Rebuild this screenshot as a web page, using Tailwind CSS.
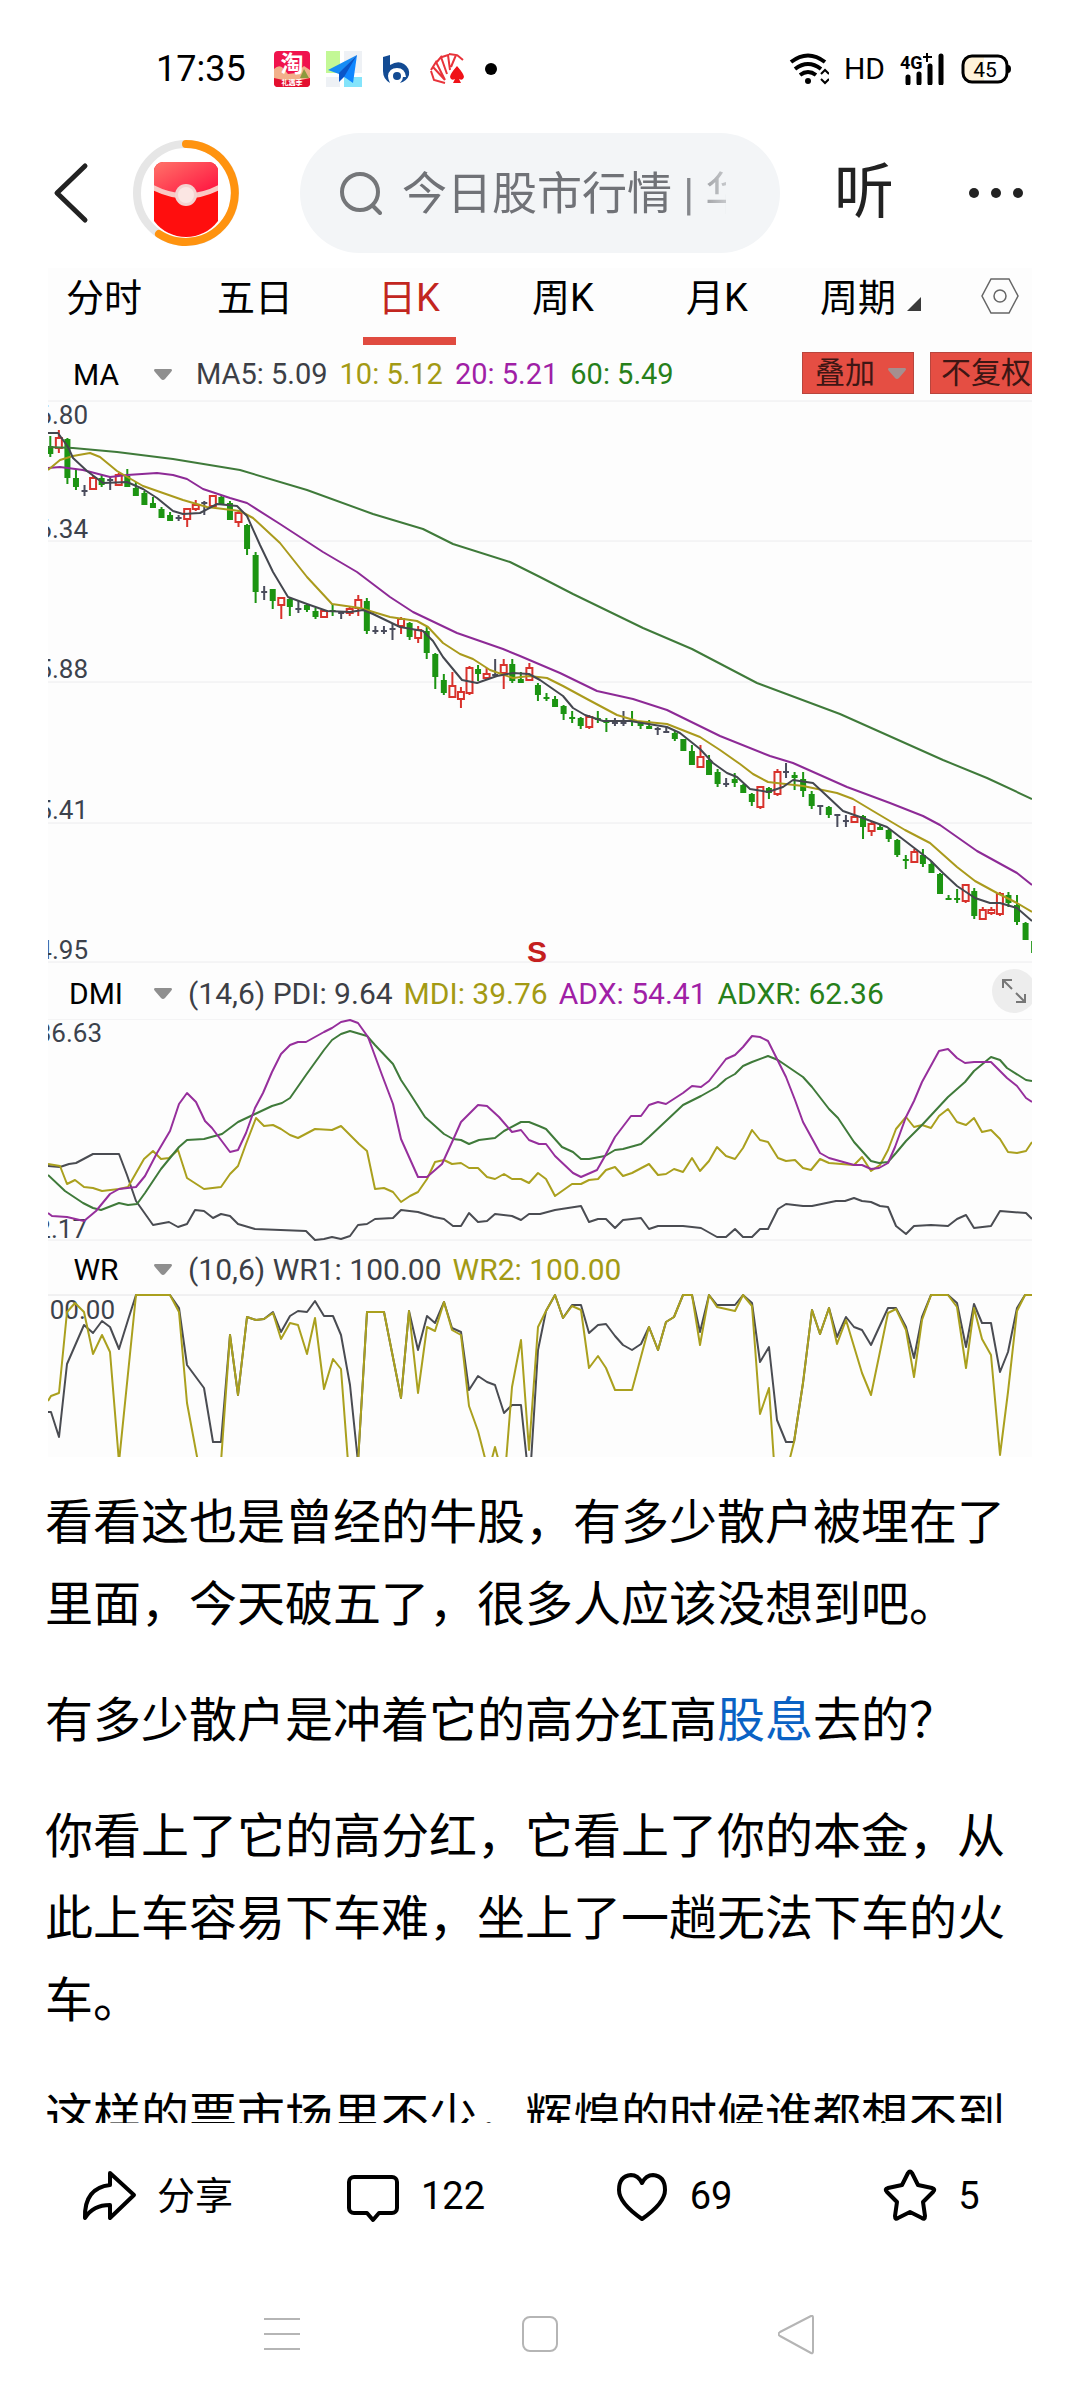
<!DOCTYPE html>
<html lang="zh-CN">
<head>
    <meta charset="UTF-8">
    <meta name="viewport" content="width=device-width, initial-scale=1.0">
    <title>今日股市行情</title>
    <script src="https://cdn.jsdelivr.net/npm/@tailwindcss/browser@4"></script>
</head>
<body class="flex h-screen flex-col overflow-hidden bg-white font-['Roboto','Noto_Sans_CJK_SC',sans-serif] text-black">

<!-- status bar -->
<div class="flex h-[110px] shrink-0 items-center pt-7 pr-[69px] pl-[156px]">
    <span class="text-[36px] leading-none">17:35</span>
    <div class="ml-7 flex items-center gap-4">
        <svg class="size-9" viewBox="0 0 36 36">
            <rect width="36" height="36" rx="4" fill="#f0134d"/>
            <path d="M0 18q5-5 9-1l5 6 8-1 8-7 6 4v11H0z" fill="#f2b08a"/>
            <path d="M26 27l4-9 5 9z" fill="#8c9a3c"/>
            <path d="M0 27q18 5 36 0v5a4 4 0 0 1-4 4H4a4 4 0 0 1-4-4z" fill="#e3102f"/>
            <text x="18" y="21" text-anchor="middle" font-size="23" font-weight="700" fill="#fff">淘</text>
            <text x="18" y="34" text-anchor="middle" font-size="7" font-weight="700" fill="#fff">礼遇季</text>
        </svg>
        <svg class="size-9" viewBox="0 0 36 36">
            <path d="M0 0h14v22H0z" fill="#c3f896"/>
            <path d="M18 0h18v22H18zM0 26h14v10H0z" fill="#eef1f5"/>
            <path d="M18 26h18v10H18z" fill="#84e4fb"/>
            <path d="M31 4L2 19l11 4z" fill="#168cf5"/>
            <path d="M31 4L14 23l13 9z" fill="#0f86ff"/>
            <path d="M31 4L13 22v9l5-5z" fill="#0a55c8"/>
        </svg>
        <svg class="size-9" viewBox="0 0 36 36">
            <path d="M5 6l7-2v10q8-5 14-1 6 4 5 11-2 6-9 8 3-3 3-6h3q-1-9-9-9-8 0-9 8 0 3 2 7-7-4-7-12z" fill="#134b93"/>
            <circle cx="19" cy="25" r="4" fill="#134b93"/>
        </svg>
        <svg class="size-9" viewBox="0 0 36 36" fill="none" stroke="#e8333a" stroke-width="2">
            <path d="M1 19l5-8 9 18M6 12l5-6 6 17M12 6l6-2 2 15M19 3l7 1-5 12M27 4l6 5M1 20l3 9 11 3M3 16l12 13"/>
            <path d="M27 15q-7 8-7 11 1 4 5 2l-2 4h8l-2-4q4 2 5-2 0-3-7-11z" fill="#f01218" stroke="none"/>
        </svg>
        <span class="ml-[3px] size-3 rounded-full bg-black"></span>
    </div>
    <div class="ml-auto flex items-center gap-[15px]">
        <svg class="h-8 w-10" viewBox="0 0 40 32" fill="none" stroke="#000" stroke-width="4">
            <path d="M2 9q17-13 34 0M6 16q13-10 26 0M11 22q8-6 16 0"/>
            <circle cx="19" cy="28" r="3" fill="#000" stroke="none"/>
            <path d="M32 21l4-4 4 4M32 26l4 4 4-4" stroke-width="2"/>
        </svg>
        <span class="text-[30px] leading-none">HD</span>
        <svg class="h-8 w-[46px]" viewBox="0 0 46 32">
            <text x="0" y="16" font-size="18" font-weight="700">4G</text>
            <path d="M23 4h9M27 0v9" stroke="#000" stroke-width="2"/>
            <path d="M8 24v6M19 21v9M30 13v17M41 3v27" stroke="#000" stroke-width="5" stroke-linecap="round"/>
        </svg>
        <svg class="h-8 w-[50px]" viewBox="0 0 50 32">
            <rect x="2" y="3" width="44" height="26" rx="9" fill="#fff"/>
            <path d="M11 3h12v26H11a9 9 0 0 1-9-9v-8a9 9 0 0 1 9-9z" fill="#fff3da"/>
            <rect x="2" y="3" width="44" height="26" rx="9" fill="none" stroke="#000" stroke-width="3"/>
            <path d="M47 12q3 0 3 4t-3 4z"/>
            <text x="24" y="24" text-anchor="middle" font-size="21">45</text>
        </svg>
    </div>
</div>

<!-- header -->
<header class="flex h-[158px] shrink-0 items-center pr-14 pl-[52px]">
    <button type="button" aria-label="返回" class="mt-2">
        <svg class="h-16 w-10" viewBox="0 0 40 64" fill="none" stroke="#222" stroke-width="5" stroke-linecap="round" stroke-linejoin="round">
            <path d="M33 5L5 32l28 27"/>
        </svg>
    </button>
    <button type="button" aria-label="红包" class="mt-2 ml-10">
        <svg class="size-[108px]" viewBox="0 0 108 108">
            <defs>
                <linearGradient id="flap" x1="0" y1="0" x2="1" y2="1">
                    <stop offset="0" stop-color="#ff7a6c"/>
                    <stop offset="1" stop-color="#ff0a3c"/>
                </linearGradient>
                <clipPath id="round"><path d="M22 32a9 9 0 0 1 9-9h46a9 9 0 0 1 9 9v50a40 40 0 0 1-64 0z"/></clipPath>
            </defs>
            <circle cx="54" cy="54" r="49" fill="none" stroke="#e6e6e6" stroke-width="8"/>
            <path d="M54 5a49 49 0 1 1-27 90" fill="none" stroke="#ff930f" stroke-width="8" stroke-linecap="round"/>
            <g clip-path="url(#round)">
                <rect x="20" y="20" width="68" height="80" fill="#ff0e0e"/>
                <path d="M20 20h68v28q-34 18-68 0z" fill="url(#flap)"/>
                <path d="M20 48q34 18 68 0" fill="none" stroke="#f9c9c4" stroke-width="5"/>
            </g>
            <circle cx="54" cy="56" r="11" fill="#f3d3d0"/>
            <circle cx="54" cy="56" r="8" fill="#fbe6e3"/>
        </svg>
    </button>
    <label class="mt-2 ml-[60px] flex h-[120px] min-w-0 flex-1 items-center rounded-full bg-[#f3f5f7] pr-[54px] pl-[38px]">
        <svg class="size-11 shrink-0" viewBox="0 0 44 44" fill="none" stroke="#747679" stroke-width="4" stroke-linecap="round">
            <circle cx="22" cy="21" r="18"/>
            <path d="M35 35l7 7"/>
        </svg>
        <input type="text" aria-label="搜索" placeholder="今日股市行情 | 华为" class="ml-5 w-full min-w-0 bg-transparent pt-1 text-[45px] leading-[60px] outline-none placeholder:text-[#707277] [mask-image:linear-gradient(to_right,black_85%,transparent_108%)]">
    </label>
    <button type="button" class="mt-2 ml-[54px] text-[60px] leading-[72px] text-[#222]">听</button>
    <button type="button" aria-label="更多" class="mt-2 ml-[74px]">
        <svg class="h-3 w-14" viewBox="0 0 56 12" fill="#222">
            <circle cx="6" cy="6" r="5"/><circle cx="28" cy="6" r="5"/><circle cx="50" cy="6" r="5"/>
        </svg>
    </button>
</header>

<main class="min-h-0 flex-1 overflow-hidden">
    <!-- stock chart -->
    <section class="mx-12 overflow-hidden bg-[#fdfdfd]">
        <nav class="grid h-[77px] grid-cols-[130fr_154fr_154fr_154fr_154fr_238fr] text-[38px] leading-[60px]">
            <button type="button" class="flex items-start pl-[18px]">分时</button>
            <button type="button" class="flex items-start justify-center">五日</button>
            <button type="button" class="flex flex-col items-center justify-between text-[#c2261f]">日K<span class="mx-auto h-2 w-[93px] bg-[#e04b40]"></span></button>
            <button type="button" class="flex items-start justify-center">周K</button>
            <button type="button" class="flex items-start justify-center">月K</button>
            <div class="flex items-start justify-between pr-3 pl-[26px]">
                <button type="button" class="flex items-center gap-[10px]">周期
                    <svg class="mt-3 size-4" viewBox="0 0 16 16" fill="#3a3a3a"><path d="M15 1v14H1z"/></svg>
                </button>
                <button type="button" aria-label="设置" class="mt-[10px]">
                    <svg class="h-9 w-10" viewBox="0 0 40 36" fill="none" stroke="#666" stroke-width="1.5">
                        <path d="M11 1h18l9 17-9 17H11L2 18z"/>
                        <circle cx="20" cy="18" r="6"/>
                    </svg>
                </button>
            </div>
        </nav>

        <div class="flex h-[55px] items-center pt-1 text-[29px] whitespace-nowrap">
            <select aria-label="主图指标" class="w-24 appearance-none text-center text-[30px]"><option>MA</option><option>BOLL</option></select>
            <svg class="ml-[10px] h-[11px] w-[18px] shrink-0" viewBox="0 0 18 11" fill="#8f8f8f"><path d="M1 0h16q2 1 0 3l-6 7q-2 2-4 0L1 3q-2-2 0-3z"/></svg>
            <p class="ml-6 flex gap-3">
                <span class="text-[#3c3f46]">MA5: 5.09</span>
                <span class="text-[#a39a14]">10: 5.12</span>
                <span class="text-[#a01fa6]">20: 5.21</span>
                <span class="text-[#27801a]">60: 5.49</span>
            </p>
            <div class="relative -mt-1 ml-auto">
                <select aria-label="叠加" class="block h-[42px] w-28 appearance-none border border-[#b8453d] bg-[#e54e43] pl-3 text-[30px] leading-[40px] text-[#3d1614]"><option>叠加</option></select>
                <svg class="pointer-events-none absolute top-4 right-2 h-[11px] w-[18px]" viewBox="0 0 18 11" fill="#a58f8f"><path d="M1 0h16q2 1 0 3l-6 7q-2 2-4 0L1 3q-2-2 0-3z"/></svg>
            </div>
            <button type="button" class="-mt-1 ml-4 h-[42px] w-[102px] shrink-0 overflow-hidden border border-r-0 border-[#b8453d] bg-[#e54e43] pl-[10px] text-left text-[30px] leading-[40px] text-[#3d1614]">不复权</button>
        </div>

        <svg id="kline" class="block w-full" viewBox="48 400 984 563" fill="none">
            <path d="M48 401h984M48 541h984M48 682h984M48 823h984M48 962h984" stroke="#ececee" stroke-width="1"/>
            <g font-size="26" fill="#3c424c" text-anchor="end">
                <text x="88" y="424">6.80</text>
                <text x="88" y="538">6.34</text>
                <text x="88" y="678">5.88</text>
                <text x="88" y="819">5.41</text>
                <text x="88" y="959">4.95</text>
            </g>
            <text x="527" y="962" font-family="Liberation Sans, sans-serif" font-size="30" font-weight="700" fill="#c4201f">S</text>
        </svg>

        <div class="flex h-14 items-center pt-1 text-[30px] whitespace-nowrap">
            <select aria-label="副图指标一" class="w-24 appearance-none text-center"><option>DMI</option><option>MACD</option></select>
            <svg class="ml-[10px] h-[11px] w-[18px] shrink-0" viewBox="0 0 18 11" fill="#8f8f8f"><path d="M1 0h16q2 1 0 3l-6 7q-2 2-4 0L1 3q-2-2 0-3z"/></svg>
            <p class="ml-4 flex gap-[11px]">
                <span class="text-[#3c3f46]">(14,6) PDI: 9.64</span>
                <span class="text-[#a39a14]">MDI: 39.76</span>
                <span class="text-[#a01fa6]">ADX: 54.41</span>
                <span class="text-[#27801a]">ADXR: 62.36</span>
            </p>
            <button type="button" aria-label="全屏" class="-mt-1 -mr-1 ml-auto flex size-11 items-center justify-center rounded-full bg-[#ededed]">
                <svg class="size-6" viewBox="0 0 24 24" fill="none" stroke="#777" stroke-width="2">
                    <path d="M1 9V1h9M1 1l9 9M23 15v8h-9M23 23l-9-9"/>
                </svg>
            </button>
        </div>

        <svg id="dmi" class="block w-full" viewBox="48 1019 984 222" fill="none">
            <path d="M48 1019h984M48 1240h984" stroke="#ececee" stroke-width="1"/>
            <g font-size="26" fill="#3c424c" text-anchor="end">
                <text x="102" y="1042">36.63</text>
                <text x="87" y="1238">2.17</text>
            </g>
        </svg>

        <div class="flex h-[53px] items-center pt-1 text-[30px] whitespace-nowrap">
            <select aria-label="副图指标二" class="w-24 appearance-none text-center"><option>WR</option><option>KDJ</option></select>
            <svg class="ml-[10px] h-[11px] w-[18px] shrink-0" viewBox="0 0 18 11" fill="#8f8f8f"><path d="M1 0h16q2 1 0 3l-6 7q-2 2-4 0L1 3q-2-2 0-3z"/></svg>
            <p class="ml-4 flex gap-[11px]">
                <span class="text-[#3c3f46]">(10,6) WR1: 100.00</span>
                <span class="text-[#a39a14]">WR2: 100.00</span>
            </p>
        </div>

        <svg id="wr" class="block w-full" viewBox="48 1294 984 163" fill="none">
            <path d="M48 1295h984" stroke="#e4e4e6" stroke-width="1"/>
            <text x="115" y="1319" text-anchor="end" font-size="26" fill="#3c424c">00.00</text>
        </svg>
    </section>

    <!-- article text -->
    <article class="mt-[25px] flex flex-col gap-[34px] px-[45px] text-[48px] leading-[82px]">
        <p>看看这也是曾经的牛股，有多少散户被埋在了里面，今天破五了，很多人应该没想到吧。</p>
        <p>有多少散户是冲着它的高分红高<a href="#" class="text-[#0a62c4]">股息</a>去的？</p>
        <p>你看上了它的高分红，它看上了你的本金，从此上车容易下车难，坐上了一趟无法下车的火车。</p>
        <p>这样的票市场里不少，辉煌的时候谁都想不到</p>
    </article>
</main>

<!-- actions -->
<footer class="grid h-[147px] shrink-0 grid-cols-4 bg-white pr-5 pb-[2px] pl-7 text-[38px] leading-none">
    <button type="button" class="flex items-center justify-center gap-5">
        <svg class="size-14" viewBox="0 0 56 56" fill="none" stroke="#000" stroke-width="4" stroke-linejoin="round">
            <path d="M29 5l24 22-24 23V37Q12 37 4 50 3 20 29 17z"/>
        </svg>分享
    </button>
    <button type="button" class="flex items-center justify-center gap-5">
        <svg class="size-14" viewBox="0 0 56 56" fill="none" stroke="#000" stroke-width="4" stroke-linejoin="round">
            <path d="M9 9h38a5 5 0 0 1 5 5v26a5 5 0 0 1-5 5H34l-6 7-6-7H9a5 5 0 0 1-5-5V14a5 5 0 0 1 5-5z"/>
        </svg>122
    </button>
    <button type="button" class="flex items-center justify-center gap-5">
        <svg class="size-14" viewBox="0 0 56 56" fill="none" stroke="#000" stroke-width="4" stroke-linejoin="round">
            <path d="M28 51Q5 35 5 22 5 8 17 7q7 0 11 8 4-8 11-8 12 1 12 15 0 13-23 29z"/>
        </svg>69
    </button>
    <button type="button" class="flex items-center justify-center gap-5">
        <svg class="size-14" viewBox="0 0 56 56" fill="none" stroke="#000" stroke-width="4" stroke-linejoin="round">
            <path d="M26 5q2-3 4 0l6 12 14 3q4 1 1 4L41 34l2 14q0 4-3 2l-12-6-12 6q-3 2-3-2l2-14L5 24q-3-3 1-4l14-3z"/>
        </svg>5
    </button>
</footer>

<!-- system navigation -->
<nav class="flex h-[130px] shrink-0 items-center justify-between px-[262px]">
    <button type="button" aria-label="最近任务">
        <svg class="size-10" viewBox="0 0 40 40" stroke="#b5b5b5" stroke-width="2"><path d="M2 4h36M2 19h36M2 34h36"/></svg>
    </button>
    <button type="button" aria-label="主屏幕">
        <svg class="size-10" viewBox="0 0 40 40" fill="none" stroke="#b5b5b5" stroke-width="2"><rect x="3" y="2" width="34" height="34" rx="7"/></svg>
    </button>
    <button type="button" aria-label="返回">
        <svg class="size-10" viewBox="0 0 40 40" fill="none" stroke="#b5b5b5" stroke-width="2" stroke-linejoin="round"><path d="M33 1q2-1 2 2v33q0 3-2 2L2 21q-3-2 0-4z"/></svg>
    </button>
</nav>

<script>
    // g = falling, r = rising, k = flat; then high, body top, body bottom, low
    const candles = `g436,446,454,457 r430,438,448,453 g438,439,478,484 g470,478,487,490 k485,491,491,496 r475,478,489,490
        g475,478,485,487 k477,480,480,490 r473,475,485,486 g469,476,487,487 g482,488,496,496 g491,493,505,505 g497,503,508,508
        g507,509,518,518 g512,515,521,521 k515,518,518,521 r508,509,519,527 r500,505,509,511 k501,503,503,515 r496,496,506,507
        g495,497,505,505 g501,503,520,520 r511,513,522,527 g524,525,549,555 g552,555,592,603 k586,592,592,600 g589,589,601,609
        r597,598,605,619 g597,599,607,616 k601,609,609,613 g604,605,610,612 g608,611,617,619 r610,611,617,618 g604,610,611,616
        k611,613,613,619 r607,609,613,616 r595,600,608,616 g598,601,631,634 k626,631,631,634 k626,631,631,634 k624,629,629,640
        r617,619,626,634 g622,623,637,640 r626,630,638,643 g627,631,653,659 g653,654,677,689 g674,680,693,695 r672,686,697,698
        r687,692,699,708 r666,668,693,695 g665,669,674,681 r668,674,678,679 k659,675,675,676 r659,665,673,689 g659,664,681,683
        g672,679,683,683 r663,668,680,681 g683,685,695,701 g693,697,698,701 g696,699,707,707 g705,706,714,720 g711,717,719,723
        g717,718,726,729 r715,717,727,729 g711,718,720,723 g718,721,722,732 k718,723,723,726 k711,723,723,726 g711,720,722,726
        g722,723,726,729 g720,726,729,729 k727,729,729,735 k727,732,732,733 g730,733,739,741 g739,739,751,751 g745,751,765,765
        r745,757,767,767 g755,760,775,775 g769,772,784,787 k778,784,784,787 g773,779,783,787 g784,785,793,793 g793,794,802,806
        r787,787,807,809 g787,788,793,799 r769,772,794,796 k763,772,772,778 g772,775,778,790 g772,779,791,797 g791,794,806,809
        k806,806,806,815 g806,807,815,818 k815,815,815,827 k815,821,821,827 r806,817,822,822 g815,816,827,839 r821,824,831,836
        g824,827,830,830 g829,830,839,842 g839,840,855,857 g855,859,861,869 r849,852,862,862 g849,855,864,867 g861,864,873,873
        g873,874,894,894 g895,898,900,900 g889,898,900,903 r885,885,901,903 g888,891,916,919 r907,910,919,920 r907,910,913,915
        r892,894,914,916 g892,895,903,907 g895,905,922,925 g922,923,940,940 g940,941,953,953`;

    const lines = {
        kline: [
            ['#3f7a3a', '48,447 73,448 117,452 173,459 240,470 307,490 373,514 423,529 453,544 510,562 540,577 573,594 643,628 692,649 757,683 840,714 943,760 987,778 1032,799'],
            ['#8d2a96', '48,468 60,467 83,470 110,477 127,475 157,473 173,475 187,479 203,489 230,498 247,503 280,524 323,552 357,572 390,597 413,612 457,633 503,649 520,656 560,673 597,691 633,699 667,710 720,736 770,756 793,763 847,787 890,803 923,816 940,825 977,851 1017,873 1032,885'],
            ['#aa9a1c', '48,470 60,460 73,456 90,453 100,457 117,471 143,486 183,500 207,507 240,511 253,518 280,543 307,577 332,604 360,608 390,617 417,621 428,627 443,643 460,654 473,659 490,670 513,678 529,676 547,678 563,686 587,699 617,715 637,721 667,724 700,737 720,750 740,764 753,774 768,782 803,786 837,793 853,799 873,811 905,830 930,843 957,867 975,881 997,893 1017,903 1032,912'],
            ['#44474f', '48,433 58,433 68,447 73,458 87,471 103,483 127,482 143,489 157,498 173,511 183,514 200,513 217,504 237,506 247,516 260,545 273,572 288,597 307,604 327,611 350,612 363,610 373,614 400,627 423,631 433,641 443,657 462,680 477,683 497,676 513,673 529,674 540,680 563,696 573,708 585,715 603,721 630,721 667,727 680,733 700,749 713,763 727,773 737,777 750,789 768,792 783,787 793,780 813,783 827,796 843,811 860,817 887,827 913,847 930,860 943,873 957,886 975,898 990,903 1000,903 1017,908 1032,921']
        ],
        dmi: [
            ['#4a4c52', '48,1166 60,1167 69,1164 76,1163 93,1154 119,1154 127,1175 136,1201 153,1225 169,1222 178,1227 187,1224 195,1210 204,1211 213,1218 221,1214 230,1216 238,1224 255,1229 306,1231 315,1240 324,1239 332,1237 341,1239 350,1236 358,1225 367,1224 375,1219 393,1218 401,1210 418,1212 434,1217 444,1219 453,1226 461,1226 469,1213 478,1222 487,1221 495,1214 512,1216 521,1220 529,1214 540,1214 555,1210 581,1206 589,1222 598,1219 606,1219 615,1228 623,1220 641,1218 649,1229 658,1226 683,1226 701,1228 717,1237 726,1237 735,1229 743,1237 752,1237 760,1229 768,1229 778,1209 786,1204 803,1206 812,1206 836,1201 845,1201 854,1198 862,1201 871,1202 880,1206 888,1207 896,1226 906,1234 914,1226 931,1225 948,1226 957,1219 966,1215 974,1228 991,1226 1000,1211 1026,1213 1032,1219'],
            ['#aaa01e', '48,1164 60,1166 67,1184 75,1180 84,1187 93,1188 102,1191 119,1189 128,1187 144,1159 153,1151 161,1159 169,1158 178,1150 187,1178 204,1189 221,1187 230,1174 238,1166 246,1144 256,1118 264,1126 273,1125 281,1129 290,1135 298,1138 315,1129 332,1130 341,1126 350,1135 359,1144 367,1151 375,1189 384,1188 393,1192 401,1202 410,1196 418,1192 427,1179 435,1162 444,1160 452,1164 461,1163 469,1168 478,1168 487,1177 495,1179 504,1174 512,1179 521,1179 529,1183 538,1173 546,1179 555,1196 572,1184 581,1184 589,1180 598,1179 606,1170 615,1167 623,1176 632,1173 649,1164 658,1175 666,1174 674,1169 683,1172 692,1158 700,1171 709,1161 717,1147 726,1156 735,1159 743,1148 752,1130 760,1140 768,1142 778,1158 786,1161 795,1160 803,1168 811,1170 820,1159 829,1163 854,1165 862,1157 871,1171 880,1165 888,1150 896,1129 906,1117 914,1127 922,1125 931,1128 939,1116 948,1109 957,1122 966,1125 974,1118 982,1132 991,1130 1000,1139 1008,1152 1017,1153 1026,1151 1032,1142'],
            ['#3f7a3a', '48,1175 65,1191 83,1203 93,1208 101,1210 119,1203 128,1205 137,1204 145,1193 161,1169 179,1147 187,1140 204,1139 222,1134 238,1122 255,1114 272,1106 282,1103 290,1098 306,1075 324,1050 332,1040 341,1034 350,1031 367,1036 375,1045 393,1064 401,1080 409,1092 425,1117 444,1134 453,1139 461,1140 469,1144 479,1140 495,1138 504,1131 521,1122 529,1122 539,1126 546,1129 562,1147 573,1152 581,1159 589,1159 605,1156 615,1150 623,1149 641,1144 649,1137 683,1105 701,1096 717,1087 726,1079 735,1074 743,1066 752,1062 768,1056 778,1060 803,1077 812,1087 829,1109 838,1118 854,1142 871,1161 879,1163 888,1162 896,1153 906,1141 922,1125 948,1097 965,1082 974,1071 991,1057 1000,1060 1007,1068 1026,1080 1032,1081'],
            ['#962f9c', '48,1213 52,1216 67,1217 84,1221 96,1211 110,1194 119,1189 136,1187 145,1176 157,1153 170,1131 179,1104 187,1093 196,1102 205,1121 212,1128 230,1152 238,1150 246,1133 255,1108 263,1093 272,1072 281,1054 290,1045 298,1042 306,1042 324,1032 332,1028 341,1022 350,1020 358,1023 368,1037 382,1075 393,1104 401,1139 418,1177 427,1177 442,1164 453,1140 461,1122 478,1105 487,1106 499,1117 512,1132 521,1130 529,1140 539,1144 546,1144 555,1156 573,1173 581,1177 597,1170 605,1156 615,1137 631,1116 641,1116 649,1105 658,1102 666,1104 683,1093 692,1086 701,1087 709,1081 726,1059 735,1055 743,1047 752,1036 760,1037 768,1041 778,1061 786,1077 795,1100 803,1122 820,1153 829,1158 854,1165 862,1165 871,1169 879,1168 888,1163 895,1147 906,1117 914,1101 922,1082 939,1051 948,1049 957,1058 965,1063 974,1062 991,1062 1007,1078 1017,1086 1026,1098 1032,1102']
        ],
        wr: [
            ['#4a4c52', '48,1412 51,1412 59,1437 67,1364 84,1325 93,1333 102,1321 110,1327 119,1349 128,1320 136,1295 170,1295 179,1308 187,1365 204,1388 213,1442 221,1442 230,1335 238,1395 247,1317 256,1320 264,1319 273,1312 281,1332 290,1316 298,1311 307,1312 315,1301 324,1316 333,1316 341,1335 350,1385 358,1462 367,1312 384,1312 401,1398 409,1311 418,1350 427,1316 435,1323 444,1302 452,1328 461,1332 469,1390 478,1376 487,1382 495,1385 504,1413 512,1405 521,1405 527,1462 531,1462 538,1350 546,1311 555,1295 563,1318 572,1305 581,1305 589,1333 598,1325 606,1324 615,1336 623,1345 632,1350 641,1344 649,1327 658,1350 666,1322 674,1317 683,1295 692,1295 700,1332 709,1295 717,1305 735,1305 743,1295 752,1303 760,1362 769,1347 777,1420 786,1442 794,1442 803,1383 812,1310 820,1334 829,1308 837,1337 846,1317 854,1327 862,1330 871,1345 888,1308 896,1308 906,1327 914,1358 922,1317 931,1295 948,1295 957,1303 966,1347 974,1304 982,1323 991,1323 1000,1372 1008,1352 1017,1308 1025,1295 1032,1295'],
            ['#aaa01e', '48,1401 51,1396 59,1393 67,1312 75,1303 84,1312 93,1354 102,1335 110,1352 119,1462 136,1295 170,1295 179,1312 187,1403 198,1462 221,1462 230,1335 238,1395 247,1317 256,1320 264,1319 273,1313 281,1339 290,1323 298,1325 307,1354 315,1318 324,1389 333,1359 341,1369 348,1462 358,1462 367,1312 384,1312 401,1398 409,1311 418,1393 427,1327 435,1331 444,1302 452,1330 461,1335 469,1406 478,1431 486,1462 491,1462 495,1447 499,1462 506,1462 512,1387 521,1340 529,1450 538,1327 546,1311 555,1295 563,1318 572,1306 581,1310 589,1368 598,1356 606,1368 615,1390 632,1390 649,1327 658,1350 666,1322 674,1317 683,1295 692,1295 700,1345 709,1295 717,1307 735,1311 743,1295 752,1306 760,1414 769,1388 774,1462 789,1462 794,1442 803,1383 812,1310 820,1334 829,1308 837,1344 846,1320 862,1373 871,1395 888,1313 896,1309 906,1330 914,1377 922,1320 931,1295 948,1295 957,1307 966,1368 974,1308 982,1339 991,1355 1000,1455 1008,1392 1017,1311 1025,1295 1032,1295']
        ]
    };

    const colors = { g: '#1c9412', r: '#d8322c', k: '#4a4c5c' };

    function add(parent, name, attrs) {
        const el = document.createElementNS('http://www.w3.org/2000/svg', name);
        for (const key in attrs) el.setAttribute(key, attrs[key]);
        parent.appendChild(el);
    }

    const kline = document.getElementById('kline');
    candles.split(/\s+/).forEach((item, i) => {
        const type = item[0];
        const [high, top, bottom, low] = item.slice(1).split(',').map(Number);
        const x = 50.3 + i * 8.555;
        const color = colors[type];
        add(kline, 'path', { d: `M${x} ${high}V${type === 'r' ? top : low}M${x} ${bottom}V${low}`, stroke: color, 'stroke-width': 2 });
        if (type === 'k') {
            add(kline, 'path', { d: `M${x - 3} ${top}h6`, stroke: color, 'stroke-width': 2 });
        } else if (type === 'r') {
            add(kline, 'rect', { x: x - 3, y: top, width: 6, height: Math.max(bottom - top, 2), stroke: color, 'stroke-width': 2 });
        } else {
            add(kline, 'rect', { x: x - 3, y: top, width: 6, height: Math.max(bottom - top, 2), fill: color });
        }
    });

    for (const id in lines) {
        const svg = document.getElementById(id);
        lines[id].forEach(([stroke, points]) => add(svg, 'polyline', { points, stroke, 'stroke-width': 2, 'stroke-linejoin': 'round' }));
    }
</script>
</body>
</html>
